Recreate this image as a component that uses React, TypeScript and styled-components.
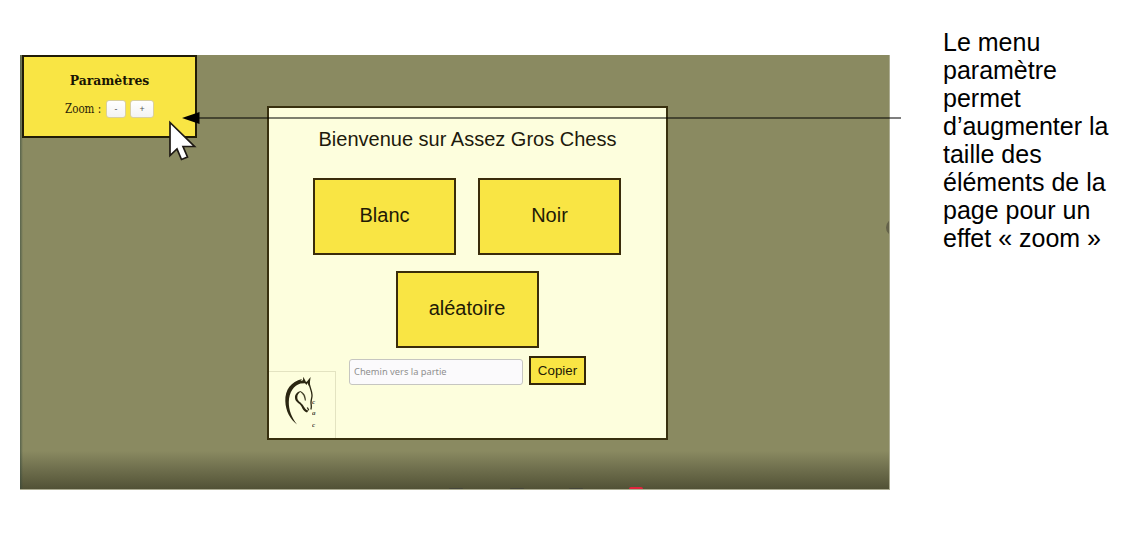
import React from "react";
import styled, { createGlobalStyle } from "styled-components";

const GlobalStyle = createGlobalStyle`
  body { margin: 0; background: #fff; }
  * { box-sizing: border-box; }
`;

const sans = `"Liberation Sans", Arial, sans-serif`;

const Page = styled.main`
  position: relative;
  display: flex;
  align-items: flex-start;
  width: 1137px;
  height: 546px;
  overflow: hidden;
  background: #fff;
`;

const Screen = styled.section`
  position: relative;
  display: flex;
  flex: none;
  align-items: flex-start;
  width: 870px;
  height: 435px;
  margin: 55px 0 0 20px;
  overflow: hidden;
  border: solid #adad93;
  border-width: 0 1px 1px 0;
  background: linear-gradient(to right, rgba(50, 70, 60, 0.55) 0, rgba(50, 70, 60, 0.4) 1px, rgba(50, 70, 60, 0) 3px),
    linear-gradient(#8a8a61 0, #8a8a61 396px, #6f6f4d 414px, #525236 434px);
`;

const Settings = styled.div`
  display: flex;
  flex: none;
  flex-direction: column;
  align-items: center;
  width: 175px;
  height: 83px;
  margin-left: 2px;
  border: 2px solid #211c06;
  background: #f9e544;
  font-family: "DejaVu Serif", serif;
  color: #2b2408;
`;

const SettingsTitle = styled.h2`
  margin: 16px 0 0;
  font-size: 12.4px;
  line-height: 16px;
  font-weight: bold;
  color: #1a1503;
`;

const ZoomRow = styled.div`
  display: flex;
  align-items: center;
  margin-top: 11px;
  height: 18px;
`;

const ZoomLabel = styled.span`
  width: 35px;
  margin-right: 6px;
  font-size: 12.6px;
  line-height: 16px;
  white-space: nowrap;
  transform: scaleX(0.82);
  transform-origin: left center;
`;

const ZoomButton = styled.button<{ $width: number }>`
  width: ${(p) => p.$width}px;
  height: 18px;
  margin-right: 4px;
  padding: 0;
  border: 1px solid #d9d0a0;
  border-radius: 3px;
  background: linear-gradient(#fff, #f3f3f3);
  font: 9px/14px "Noto Sans", sans-serif;
  color: #555;

  &:last-child { margin-right: 0; }
`;

const Dialog = styled.div`
  position: relative;
  display: flex;
  flex: none;
  flex-direction: column;
  align-items: center;
  width: 401px;
  height: 334px;
  margin: 51px 0 0 70px;
  border: 2px solid #38300f;
  background: #fdfedd;
  font-family: ${sans};
  color: #1d1a0c;
`;

const Heading = styled.h1`
  margin: 20px 0 0;
  font-size: 20px;
  line-height: 23px;
  font-weight: normal;
`;

const Choices = styled.div`
  display: flex;
  flex-wrap: wrap;
  justify-content: center;
  gap: 16px 22px;
  width: 340px;
  margin: 27px 1px 0 0;
`;

const Choice = styled.button`
  width: 143px;
  height: 77px;
  padding: 0 0 3px;
  border: 2px solid #3a2c0a;
  background: #f9e544;
  font: 20px/23px ${sans};
  color: #221a06;
`;

const LinkRow = styled.div`
  display: flex;
  align-items: flex-end;
  gap: 6px;
  margin-top: 8px;
`;

const PathInput = styled.input`
  width: 174px;
  height: 26px;
  padding: 0 4px 1px;
  border: 1px solid #c6c6c1;
  border-radius: 3px;
  background: #fbfafc;
  font: 9.3px "Noto Sans", sans-serif;

  &::placeholder { color: #8f8f8f; opacity: 1; }
`;

const CopyButton = styled.button`
  width: 57px;
  height: 29px;
  padding: 0;
  border: 2px solid #33260a;
  background: #f9e544;
  font: 13.33px/16px ${sans};
  color: #221a06;
`;

const Logo = styled.svg`
  position: absolute;
  left: 0;
  bottom: 0;
  width: 67px;
  height: 67px;
  border: solid #e3e3c1;
  border-width: 1px 1px 0 0;
`;

const Handle = styled.span`
  position: absolute;
  right: -14px;
  top: 164px;
  width: 17px;
  height: 17px;
  border-radius: 50%;
  background: #64624a;
`;

const DockDot = styled.span<{ $left: number; $color: string }>`
  position: absolute;
  left: ${(p) => p.$left}px;
  bottom: 0;
  width: 14px;
  height: 1px;
  border-radius: 2px 2px 0 0;
  background: ${(p) => p.$color};
`;

const RedDot = styled(DockDot)`
  height: 2px;
`;

const Note = styled.p`
  width: 180px;
  margin: 28px 0 0 53px;
  font: 25px/28px ${sans};
  color: #000;
  white-space: nowrap;
`;

const Overlay = styled.svg`
  position: absolute;
  left: 0;
  top: 0;
  pointer-events: none;
`;

const noteLines = [
  "Le menu",
  "paramètre",
  "permet",
  "d’augmenter la",
  "taille des",
  "éléments de la",
  "page pour un",
  "effet « zoom »",
];

const HorseLogo = () => (
  <Logo viewBox="0 0 66 66" fill="#2a2611">
    <path d="M33 7C22 9.500 16 18 16.300 29C16.600 39 21 47 28 52.500C22.500 45 19.700 38 19.800 30C20 20 25 13.500 31.500 11.500L36 11.200L37.500 13L38.500 11L40.300 15L41.600 5L38 9.500L37 10L34.300 4.800L34 8.200L31.500 9z" />
    <path
      d="M40 10C40 14 42.800 18 43 23C43.200 26 41.800 28 42 31C42.100 33 42.800 34.500 42 37"
      fill="none"
      stroke="#2a2611"
      strokeWidth="1.300"
      strokeLinecap="round"
    />
    <path d="M32.500 19C28 19.500 25.600 22.500 26 26C26.300 29.500 29 30.500 31 32.500C33.500 35 33 38.500 38 40.500L39.500 38.500C36 38 35.500 35 33.500 32.500C31.500 30 28.300 29 28.300 25.500C28.300 22.500 29.500 21 32.500 19z" />
    <path d="M31.500 19.800C34.500 20.500 36.600 23.500 36.300 28.500C35.800 25 34.500 22 31.500 19.800z" stroke="#2a2611" strokeWidth="0.600" />
    <path d="M38.300 35.500L39.800 38.300" stroke="#2a2611" strokeWidth="1.200" />
    <g fontFamily="Liberation Serif, serif" fontStyle="italic" fontSize="7" fontWeight="bold" opacity="0.850">
      <text x="43" y="31.500">c</text>
      <text x="43" y="42.500">a</text>
      <text x="43" y="54.500">c</text>
    </g>
  </Logo>
);

export default function App() {
  return (
    <>
      <GlobalStyle />
      <Page>
        <Screen>
          <Settings>
            <SettingsTitle>Paramètres</SettingsTitle>
            <ZoomRow>
              <ZoomLabel>Zoom :</ZoomLabel>
              <ZoomButton $width={20}>-</ZoomButton>
              <ZoomButton $width={24}>+</ZoomButton>
            </ZoomRow>
          </Settings>
          <Dialog>
            <Heading>Bienvenue sur Assez Gros Chess</Heading>
            <Choices>
              <Choice>Blanc</Choice>
              <Choice>Noir</Choice>
              <Choice>aléatoire</Choice>
            </Choices>
            <LinkRow>
              <PathInput placeholder="Chemin vers la partie" />
              <CopyButton>Copier</CopyButton>
            </LinkRow>
            <HorseLogo />
          </Dialog>
          <Handle />
          <DockDot $left={429} $color="#45463a" />
          <DockDot $left={490} $color="#45463a" />
          <DockDot $left={549} $color="#45463a" />
          <RedDot $left={609} $color="#e0243c" />
        </Screen>
        <Note>
          {noteLines.map((line) => (
            <React.Fragment key={line}>
              {line}
              <br />
            </React.Fragment>
          ))}
        </Note>
        <Overlay width="1137" height="546">
          <path
            d="M170 122.500V155.500L177 149l4.500 10.500 6-2.500-4.500-10.500H194.500z"
            fill="#fff"
            stroke="#1e1914"
            strokeWidth="1.700"
          />
          <path d="M197 118H901" stroke="#000" strokeWidth="1.100" />
          <path d="M182 118L199.500 112V124z" fill="#000" />
        </Overlay>
      </Page>
    </>
  );
}
